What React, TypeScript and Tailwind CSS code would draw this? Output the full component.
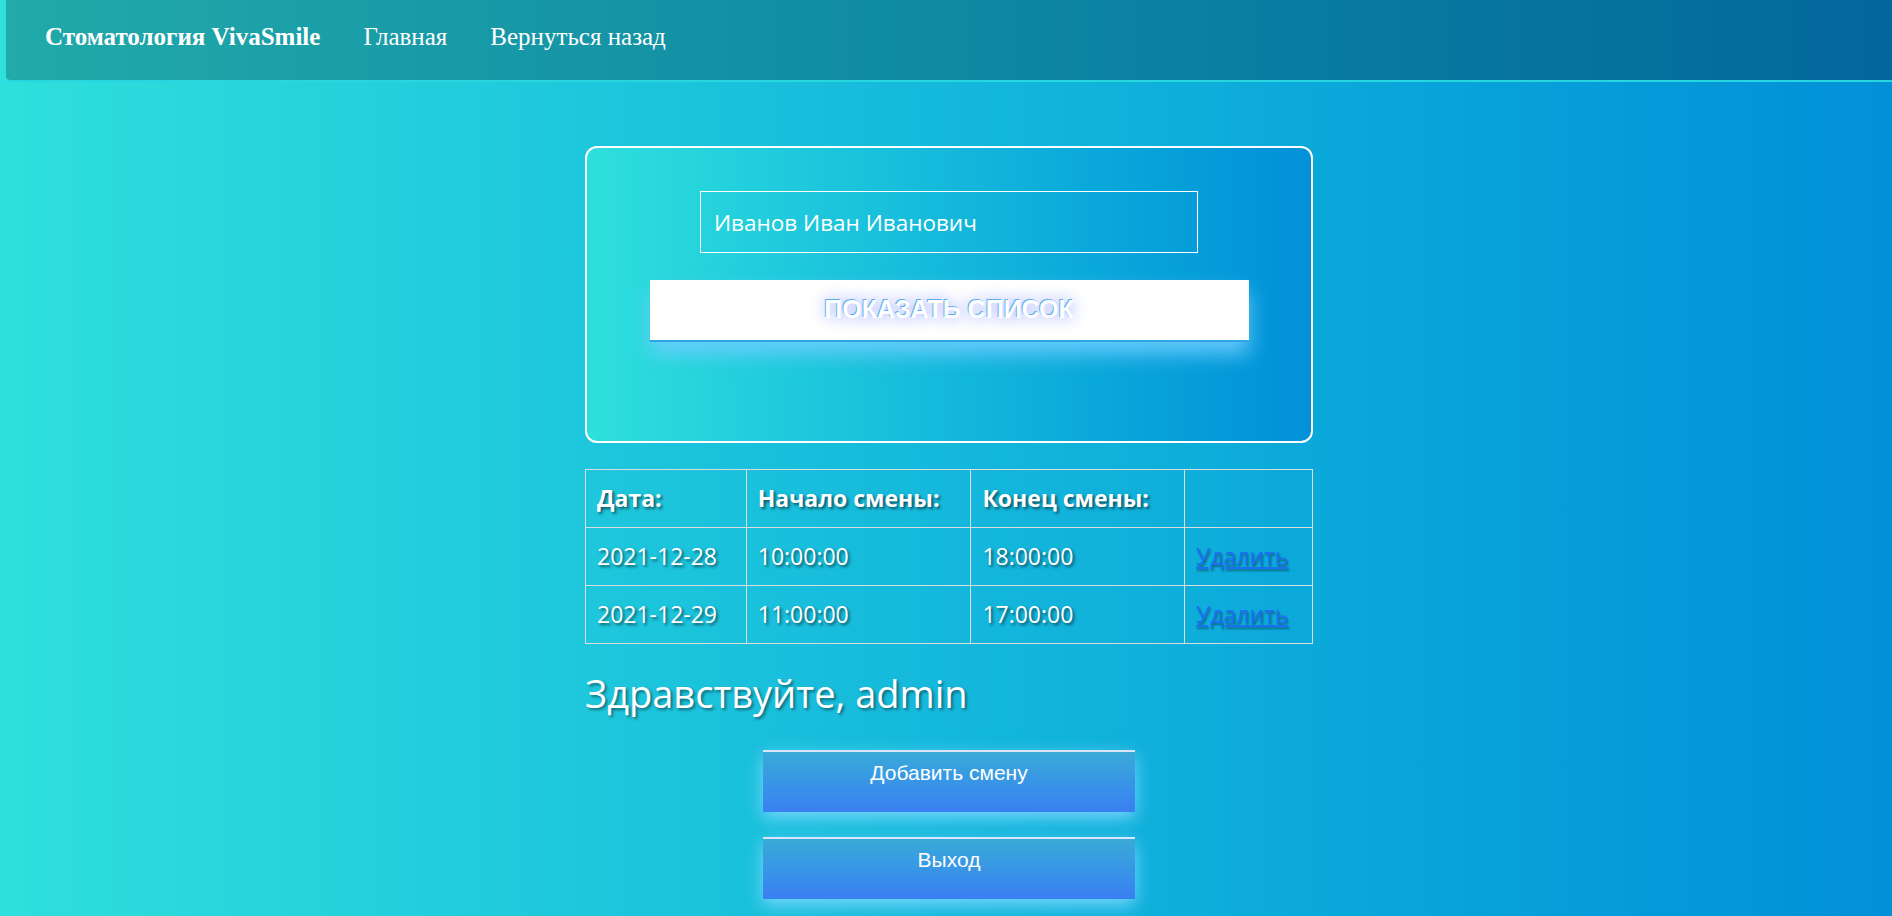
export default function App() {
  const rows = [
    { date: "2021-12-28", start: "10:00:00", end: "18:00:00" },
    { date: "2021-12-29", start: "11:00:00", end: "17:00:00" },
  ];

  return (
    <div className="min-h-screen w-full bg-gradient-to-r from-[#2ee0dc] to-[#0390d8] pl-[6px] pb-4">
      {/* navbar */}
      <nav className="flex h-[82px] items-center gap-[43px] rounded-bl-[5px] border-b-2 border-[#27d6df] bg-gradient-to-r from-[#21aaa9] to-[#04679c] pb-[6px] pl-[39px] font-['Liberation_Serif',serif] text-[25px] text-white">
        <span className="font-bold">Стоматология VivaSmile</span>
        <a className="cursor-pointer">Главная</a>
        <a className="cursor-pointer">Вернуться назад</a>
      </nav>

      <main className="mx-auto mt-[64px] w-[728px]">
        {/* search card */}
        <div className="flex h-[297px] flex-col items-center rounded-[12px] border-2 border-white bg-gradient-to-r from-[#2ee0dc] to-[#0390d8] pt-[43px]">
          <input
            readOnly
            value="Иванов Иван Иванович"
            className="h-[62px] w-[498px] border border-white bg-transparent px-[13px] font-['Open_Sans',sans-serif] text-[22.5px] text-white outline-none"
          />
          <button className="mt-[27px] h-[62px] w-[599px] border-b-2 border-[#2ea4e0] bg-white font-['Liberation_Sans',sans-serif] text-[25px] font-bold uppercase text-white shadow-[0_12px_20px_rgba(110,205,255,0.9)] [text-shadow:-1px_-1px_0_#5ab0ee,0_0_14px_#aeb8ff,0_0_22px_#c8ceff]">
            Показать список
          </button>
        </div>

        {/* shifts table */}
        <table className="mt-[26px] w-full border-collapse font-['Open_Sans',sans-serif] text-[23px] text-white [text-shadow:2px_2px_3px_rgba(0,0,0,0.55)]">
          <colgroup>
            <col className="w-[161px]" />
            <col className="w-[225px]" />
            <col className="w-[214px]" />
            <col className="w-[128px]" />
          </colgroup>
          <thead>
            <tr className="h-[58px]">
              <th className="border border-[#dcdcdc] px-[11px] text-left font-bold">Дата:</th>
              <th className="border border-[#dcdcdc] px-[11px] text-left font-bold">Начало смены:</th>
              <th className="border border-[#dcdcdc] px-[11px] text-left font-bold">Конец смены:</th>
              <th className="border border-[#dcdcdc] px-[11px]"></th>
            </tr>
          </thead>
          <tbody>
            {rows.map((r) => (
              <tr key={r.date} className="h-[58px]">
                <td className="border border-[#dcdcdc] px-[11px]">{r.date}</td>
                <td className="border border-[#dcdcdc] px-[11px]">{r.start}</td>
                <td className="border border-[#dcdcdc] px-[11px]">{r.end}</td>
                <td className="border border-[#dcdcdc] px-[11px]">
                  <a className="cursor-pointer text-[#1c6ff2] underline [text-shadow:1px_2px_2px_rgba(0,0,0,0.4)]">Удалить</a>
                </td>
              </tr>
            ))}
          </tbody>
        </table>

        <h1 className="mt-[27px] font-['Open_Sans',sans-serif] text-[38px] leading-[44px] text-white [text-shadow:2px_2px_3px_rgba(0,0,0,0.45)]">
          Здравствуйте, admin
        </h1>

        <div className="mt-[35px] flex flex-col items-center gap-[25px] font-['Liberation_Sans',sans-serif] text-[21px] text-white">
          <button className="flex h-[62px] w-[372px] items-start justify-center border-t-2 border-white/80 bg-gradient-to-b from-[#3aaad8] to-[#3a7ff2] pt-[9px] leading-[23px] shadow-[0_6px_16px_rgba(125,215,255,0.95)]">
            Добавить смену
          </button>
          <button className="flex h-[62px] w-[372px] items-start justify-center border-t-2 border-white/80 bg-gradient-to-b from-[#3aaad8] to-[#3a7ff2] pt-[9px] leading-[23px] shadow-[0_6px_16px_rgba(125,215,255,0.95)]">
            Выход
          </button>
        </div>
      </main>
    </div>
  );
}
